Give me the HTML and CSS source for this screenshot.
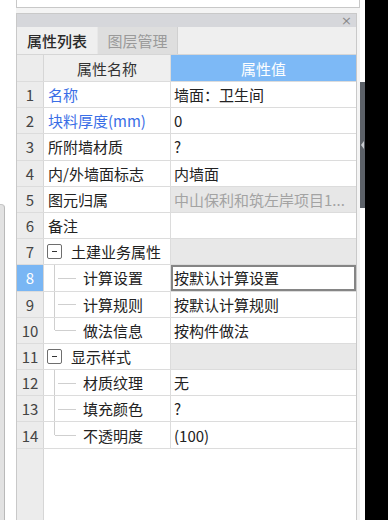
FILE: index.html
```html
<!DOCTYPE html>
<html lang="zh-CN">
<head>
<meta charset="utf-8">
<link rel="stylesheet" href="styles.css">
</head>
<body>
<div class="screen">
  <div class="leftcol"><div class="stub"></div></div>
  <div class="main">
    <div class="topbox"><span class="toptext">墙面：卫生间 <span class="blue">属性编辑</span></span></div>
    <div class="panel">
      <div class="titlebar"><span class="close">×</span></div>
      <div class="tabs">
        <div class="tab active">属性列表</div>
        <div class="tab inactive">图层管理</div>
      </div>
      <div class="grid">
        <div class="row head"><div class="num"></div><div class="name hname">属性名称</div><div class="val hval">属性值</div></div>
        <div class="row"><div class="num">1</div><div class="name blue">名称</div><div class="val">墙面：卫生间</div></div>
        <div class="row"><div class="num">2</div><div class="name blue">块料厚度(mm)</div><div class="val">0</div></div>
        <div class="row"><div class="num">3</div><div class="name">所附墙材质</div><div class="val">?</div></div>
        <div class="row"><div class="num">4</div><div class="name">内/外墙面标志</div><div class="val">内墙面</div></div>
        <div class="row"><div class="num">5</div><div class="name">图元归属</div><div class="val dis">中山保利和筑左岸项目1...</div></div>
        <div class="row"><div class="num">6</div><div class="name">备注</div><div class="val"></div></div>
        <div class="row"><div class="num">7</div><div class="name grp"><span class="box"><span class="minus"></span></span>土建业务属性</div><div class="val gray"></div></div>
        <div class="row"><div class="num sel">8</div><div class="name child"><span class="tree first"></span>计算设置</div><div class="val selval">按默认计算设置</div></div>
        <div class="row"><div class="num">9</div><div class="name child"><span class="tree"></span>计算规则</div><div class="val">按默认计算规则</div></div>
        <div class="row"><div class="num">10</div><div class="name child"><span class="tree last"></span>做法信息</div><div class="val">按构件做法</div></div>
        <div class="row"><div class="num">11</div><div class="name grp"><span class="box"><span class="minus"></span></span>显示样式</div><div class="val gray"></div></div>
        <div class="row"><div class="num">12</div><div class="name child"><span class="tree first"></span>材质纹理</div><div class="val">无</div></div>
        <div class="row"><div class="num">13</div><div class="name child"><span class="tree"></span>填充颜色</div><div class="val">?</div></div>
        <div class="row"><div class="num">14</div><div class="name child"><span class="tree last"></span>不透明度</div><div class="val">(100)</div></div>
        <div class="filler"><div class="fnum"></div><div class="frest"></div></div>
      </div>
    </div>
  </div>
  <div class="splitter"><div class="handle"><span class="tri"></span></div></div>
  <div class="black"></div>
</div>
</body>
</html>
```
FILE: styles.css
```css
* { box-sizing: border-box; }
html, body { margin: 0; padding: 0; }
body {
  width: 388px;
  height: 520px;
  overflow: hidden;
  background: #ffffff;
  font-family: "Noto Sans CJK SC", "Noto Sans", sans-serif;
  font-size: 15px;
  color: #222;
}
.screen { display: flex; width: 388px; height: 520px; }
.leftcol { width: 16px; display: flex; flex-direction: column; padding-top: 204px; }
.stub {
  width: 5px;
  flex: 1;
  background: #e2e2e2;
  border-right: 1px solid #b9b9b9;
  border-top: 1px solid #c6c6c6;
  border-top-right-radius: 4px;
}
.main { width: 344px; display: flex; flex-direction: column; background: #f4f4f4; }
.topbox {
  height: 8px;
  background: #fff;
  border: 1px solid #c8c8c8;
  border-top: none;
  overflow: hidden;
  padding-left: 60px;
  margin-right: 0;
}
.toptext { display: block; margin-top: -19px; line-height: 22px; color: #333; }
.panel {
  margin-top: 5px;
  width: 341px;
  flex: 1;
  display: flex;
  flex-direction: column;
  border: 1px solid #c9c9c9;
  border-bottom: none;
  background: #fff;
}
.titlebar {
  height: 13px;
  background: #d6d7db;
  display: flex;
  justify-content: flex-end;
  align-items: center;
  padding-right: 4px;
}
.close { color: #8a8a8a; font-size: 13px; line-height: 13px; font-family: "DejaVu Sans", sans-serif; }
.tabs {
  height: 28px;
  display: flex;
  background: #efefef;
  border-bottom: 1px solid #d6d6d6;
}
.tab { display: flex; align-items: center; justify-content: center; height: 100%; }
.tab.active { width: 80px; color: #2a2a2a; background: #efefef; font-weight: 500; }
.tab.inactive {
  width: 81px;
  color: #9a9a9a;
  background: #dedede;
  border-left: 1px solid #e8e8e8;
  border-right: 1px solid #d0d0d0;
}
.grid { flex: 1; display: flex; flex-direction: column; }
.row {
  display: flex;
  height: 26.2px;
  border-bottom: 1px solid #dcdcdc;
}
.row.head { height: 27px; }
.num {
  width: 27px;
  background: #ececec;
  border-right: 1px solid #d6d6d6;
  display: flex;
  align-items: center;
  justify-content: center;
  color: #444;
}
.num.sel { background: #79b6f4; color: #fff; }
.name {
  width: 127px;
  border-right: 1px solid #dcdcdc;
  display: flex;
  align-items: center;
  padding-left: 4px;
  white-space: nowrap;
  position: relative;
}
.hname { background: #efefef; justify-content: center; padding-left: 0; color: #333; }
.val {
  flex: 1;
  display: flex;
  align-items: center;
  padding-left: 3px;
  white-space: nowrap;
  overflow: hidden;
}
.hval { background: #7db9f6; color: #fff; justify-content: center; padding-left: 0; }
.blue { color: #3a6ee6; }
.dis { background: #e7e7e7; color: #a3a3a3; }
.gray { background: #e8e8e8; }
.selval { border: 2px solid #858585; padding-left: 1px; }
.grp { padding-left: 3px; }
.box {
  width: 15px;
  height: 15px;
  border: 1px solid #6e6e6e;
  border-radius: 2px;
  display: flex;
  align-items: center;
  justify-content: center;
  margin-right: 9px;
  background: #fff;
}
.minus { width: 5px; height: 1px; background: #333; }
.child { padding-left: 39px; }
.tree {
  position: absolute;
  left: 10px;
  top: 0;
  width: 21px;
  height: 100%;
  border-left: 1px solid #cfcfcf;
}
.tree::after {
  content: "";
  position: absolute;
  left: 3px;
  top: 50%;
  width: 18px;
  border-top: 1px solid #cfcfcf;
}
.tree.last { height: 50%; }
.tree.last::after { left: 0; top: 100%; width: 21px; }
.filler { flex: 1; display: flex; }
.fnum { width: 27px; background: #ececec; border-right: 1px solid #d6d6d6; }
.frest { flex: 1; background: #fff; }
.splitter { width: 5px; background: #fff; padding-top: 82px; }
.handle {
  height: 126px;
  background: #5c6168;
  display: flex;
  align-items: center;
  justify-content: center;
}
.tri {
  width: 0;
  height: 0;
  border-top: 4px solid transparent;
  border-bottom: 4px solid transparent;
  border-right: 3px solid #c9ccd1;
}
.black { width: 23px; background: #000; }
```
